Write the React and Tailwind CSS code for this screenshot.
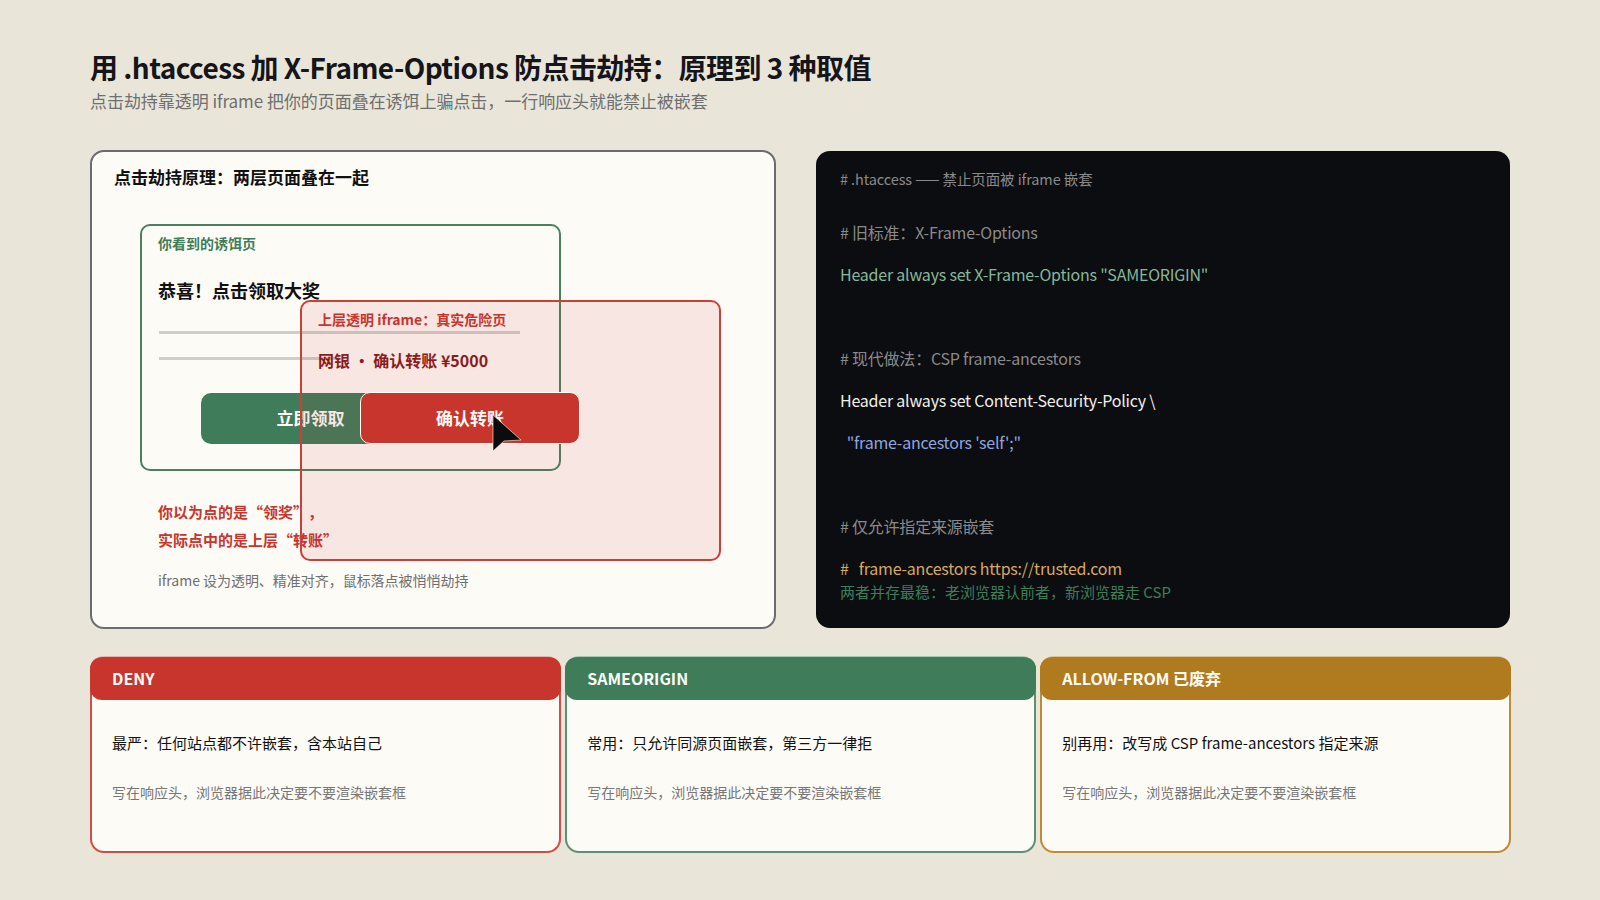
const FONT = "font-['Noto_Sans_CJK_SC','Noto_Sans',sans-serif]";

const CODE_LINES = [
  { text: "# 旧标准：X-Frame-Options", color: "text-[#8a8a8a]" },
  { text: 'Header always set X-Frame-Options "SAMEORIGIN"', color: "text-[#86b89a]" },
  { text: "\u00a0", color: "" },
  { text: "# 现代做法：CSP frame-ancestors", color: "text-[#8a8a8a]" },
  { text: "Header always set Content-Security-Policy \\", color: "text-[#f1efe8]" },
  { text: "\u00a0\u00a0\"frame-ancestors 'self';\"", color: "text-[#8fa5e0]" },
  { text: "\u00a0", color: "" },
  { text: "# 仅允许指定来源嵌套", color: "text-[#8a8a8a]" },
  { text: "#\u00a0\u00a0\u00a0frame-ancestors https://trusted.com", color: "text-[#d9a95c]" },
];

const CARDS = [
  {
    title: "DENY",
    border: "border-[#cf4d46] border-t-[#e6b3ad]",
    head: "bg-[#c8352d]",
    desc: "最严：任何站点都不许嵌套，含本站自己",
  },
  {
    title: "SAMEORIGIN",
    border: "border-[#5a9073] border-t-[#a9c6b4]",
    head: "bg-[#3f7d5a]",
    desc: "常用：只允许同源页面嵌套，第三方一律拒",
  },
  {
    title: "ALLOW-FROM 已废弃",
    border: "border-[#bd8c3a] border-t-[#dcc290]",
    head: "bg-[#b07a1e]",
    desc: "别再用：改写成 CSP frame-ancestors 指定来源",
  },
];

const Cursor = () => (
  <svg className="absolute left-[190px] top-[112px]" width="30" height="38" viewBox="0 0 30 38">
    <path d="M1 1 L1 37 L12 27 L29 26 Z" fill="#0c0c0e" stroke="#fdfbf6" strokeWidth="0.6" />
  </svg>
);

const Overlay = () => (
  <div className="absolute left-[208px] top-[148px] w-[421px] h-[261px] rounded-[10px] border-2 border-[#c9403a] bg-[#c8352d]/10 pl-[16px]">
    <div className="mt-[5px] text-[14px] leading-[24px] font-bold text-[#c8352d]">上层透明 iframe：真实危险页</div>
    <div className="mt-[17px] text-[16px] leading-[24px] font-bold text-[#8a1c1c]">网银 · 确认转账 ¥5000</div>
    <div className="absolute left-[58px] top-[90px] w-[220px] h-[52px] rounded-[10px] border border-[#fdfbf6] bg-[#c8352d] flex items-center justify-center text-[17px] font-bold text-[#fdfbf6]">
      确认转账
    </div>
    <Cursor />
  </div>
);

const Decoy = () => (
  <div className="ml-[26px] mt-[33px] w-[421px] h-[247px] rounded-[10px] border-2 border-[#4a7f60] pl-[16px] pt-[5px]">
    <div className="text-[14px] leading-[24px] font-bold text-[#3f7d5a]">你看到的诱饵页</div>
    <div className="mt-[21px] text-[18px] leading-[28px] font-bold text-[#111]">恭喜！点击领取大奖</div>
    <div className="mt-[27px] ml-px h-[3px] w-[361px] bg-[#d0cec9]" />
    <div className="mt-[23px] ml-px h-[3px] w-[180px] bg-[#d0cec9]" />
    <div className="mt-[33px] ml-[43px] w-[219px] h-[51px] pb-[2px] rounded-[10px] bg-[#3f7d5a] flex items-center justify-center text-[17px] font-bold text-[#fdfbf6]">
      立即领取
    </div>
  </div>
);

const Principle = () => (
  <section className="relative w-[686px] h-[479px] rounded-[14px] border-2 border-[#6b6b70] bg-[#fdfbf6] pl-[22px] pt-[11px]">
    <h2 className="text-[17px] leading-[28px] font-bold text-[#111]">点击劫持原理：两层页面叠在一起</h2>
    <Decoy />
    <div className="ml-[44px] mt-[27px] text-[15px] leading-[28px] font-bold text-[#c8352d] [text-spacing-trim:space-all]">
      <p>你以为点的是“领奖”，</p>
      <p>实际点中的是上层“转账”</p>
    </div>
    <p className="ml-[44px] mt-[12px] text-[14px] leading-[28px] tracking-[-0.03px] text-[#6f6f6f]">iframe 设为透明、精准对齐，鼠标落点被悄悄劫持</p>
    <Overlay />
  </section>
);

const CodePanel = () => (
  <section className="w-[694px] h-[477px] mt-[1px] rounded-[14px] bg-[#0c0d10] pl-[24px] pt-[16px] text-[16px] leading-[42px] tracking-[-0.22px]">
    <div className="text-[14.5px] leading-[24px] mb-[20px] tracking-[-0.1px] text-[#8a8a8a]"># .htaccess —— 禁止页面被 iframe 嵌套</div>
    {CODE_LINES.map((line, i) => (
      <div key={i} className={line.color}>{line.text}</div>
    ))}
    <div className="text-[15px] leading-[24px] -mt-[9px] tracking-normal text-[#3f7d5a]">两者并存最稳：老浏览器认前者，新浏览器走 CSP</div>
  </section>
);

export default function App() {
  return (
    <div className={`${FONT} h-[900px] w-full overflow-hidden bg-[#e9e6d9] px-[90px] pt-[47px]`}>
      <h1 className="text-[28px] leading-[41px] font-bold tracking-[-0.56px] text-[#15151a]">用 .htaccess 加 X-Frame-Options 防点击劫持：原理到 3 种取值</h1>
      <p className="text-[17px] leading-[26px] tracking-[-0.05px] text-[#6f6f6f]">点击劫持靠透明 iframe 把你的页面叠在诱饵上骗点击，一行响应头就能禁止被嵌套</p>

      <div className="mt-[36px] flex justify-between">
        <Principle />
        <CodePanel />
      </div>

      <div className="mt-[27px] -mr-px grid grid-cols-3 gap-[4.5px]">
        {CARDS.map((c) => (
          <div key={c.title} className={`h-[197px] rounded-[14px] border-2 border-t ${c.border} bg-[#fdfbf6]`}>
            <div className={`-mx-[2px] h-[43px] rounded-[12px] ${c.head} pl-[22px] text-[16px] leading-[43px] font-bold text-[#fdfbf6]`}>{c.title}</div>
            <p className="pl-[20px] mt-[29px] text-[15px] leading-[28px] text-[#111]">{c.desc}</p>
            <p className="pl-[20px] mt-[21px] text-[14px] leading-[28px] text-[#777]">写在响应头，浏览器据此决定要不要渲染嵌套框</p>
          </div>
        ))}
      </div>
    </div>
  );
}
